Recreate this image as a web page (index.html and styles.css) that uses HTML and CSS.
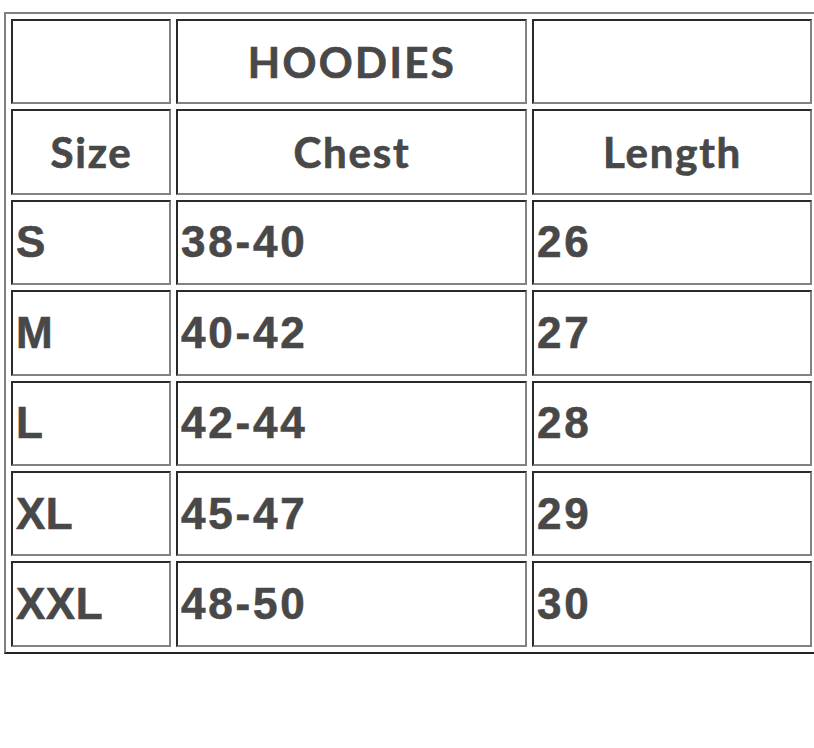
FILE: index.html
```html
<!DOCTYPE html>
<html>
<head>
<meta charset="utf-8">
<link rel="stylesheet" href="styles.css">
</head>
<body>
<table class="size-table">
  <tr>
    <td class="c1"></td>
    <td class="c2 head title">HOODIES</td>
    <td class="c3"></td>
  </tr>
  <tr>
    <td class="c1 head">Size</td>
    <td class="c2 head">Chest</td>
    <td class="c3 head">Length</td>
  </tr>
  <tr><td class="c1">S</td><td class="c2">38-40</td><td class="c3">26</td></tr>
  <tr><td class="c1">M</td><td class="c2">40-42</td><td class="c3">27</td></tr>
  <tr><td class="c1">L</td><td class="c2">42-44</td><td class="c3">28</td></tr>
  <tr><td class="c1">XL</td><td class="c2">45-47</td><td class="c3">29</td></tr>
  <tr><td class="c1">XXL</td><td class="c2">48-50</td><td class="c3">30</td></tr>
</table>
</body>
</html>
```
FILE: styles.css
```css
html, body {
  overflow: hidden;
}
body {
  margin: 12px 0 0 4px;
  background: #ffffff;
  font-family: "Liberation Sans", Arial, sans-serif;
  color: #484848;
}
.size-table {
  border-collapse: separate;
  border-spacing: 5px;
  width: 815px;
  table-layout: fixed;
  border-style: solid;
  border-width: 2px;
  border-color: #808080 #222222 #222222 #808080;
}
.size-table td {
  box-sizing: border-box;
  height: 85.4px;
  padding: 0 2px 0 3px;
  border-style: solid;
  border-width: 2px;
  border-color: #2a2a2a #828282 #828282 #2a2a2a;
  font-size: 44px;
  font-weight: bold;
  letter-spacing: 2.8px;
  -webkit-text-stroke: 0.6px #484848;
  vertical-align: middle;
  text-align: left;
  line-height: 1;
}
.size-table .c1 { width: 160px; letter-spacing: 0.5px; }
.size-table .c2 { width: 351px; }
.size-table .c3 { width: 280px; }
.size-table td.head {
  font-family: Lato, "Liberation Sans", sans-serif;
  font-weight: 700;
  font-size: 42px;
  letter-spacing: 1.8px;
  -webkit-text-stroke: 0.7px #484848;
  text-align: center;
}
.size-table td.title {
  letter-spacing: 2.4px;
}
```
